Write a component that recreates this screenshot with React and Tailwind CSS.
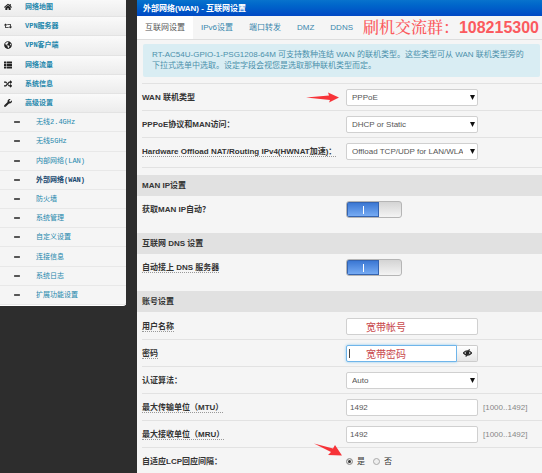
import React, { useState } from "react";
import { FaHome, FaRetweet, FaGlobeAmericas, FaThList, FaRandom, FaWrench, FaMinus } from "react-icons/fa";

const menu = [
  { icon: FaHome, label: "网络地图" },
  { icon: FaRetweet, label: "VPN服务器" },
  { icon: FaGlobeAmericas, label: "VPN客户端" },
  { icon: FaThList, label: "网络流量" },
  { icon: FaRandom, label: "系统信息" },
  { icon: FaWrench, label: "高级设置" },
];

const subMenu = [
  "无线2.4GHz", "无线5GHz", "内部网络(LAN)", "外部网络(WAN)", "防火墙",
  "系统管理", "自定义设置", "连接信息", "系统日志", "扩展功能设置",
];

const tabs = ["互联网设置", "IPv6设置", "端口转发", "DMZ", "DDNS"];

function Sidebar() {
  return (
    <nav className="w-[126px] shrink-0 self-start grid auto-rows-fr min-h-[308px] -mt-[2px] bg-[#f5f5f5] rounded-br-[3px] border-b border-white font-['Liberation_Mono','Noto_Sans_CJK_SC',monospace] text-[7px] leading-[8px] text-[#2487ac]">
      {menu.map(({ icon: Icon, label }) => (
        <a key={label} href="#" className="flex items-center pl-1 font-bold bg-linear-to-b from-[#fafafa] to-[#ececec] border-b border-[#e3e3e3]">
          <Icon className="w-2 h-2 mr-[13px] text-[#222]" />
          {label}
        </a>
      ))}
      {subMenu.map((label) => (
        <a key={label} href="#" className={"flex items-center pl-[14px] border-b border-[#e8e8e8] " + (label === "外部网络(WAN)" ? "font-bold text-[#17476f]" : "")}>
          <FaMinus className="w-[6px] h-2 mr-4 text-[#222]" />
          {label}
        </a>
      ))}
    </nav>
  );
}

function Row({ id, label, dotted, last, arrow, children }) {
  return (
    <div className={"relative flex items-center h-[27px] " + (last ? "" : "border-b border-[#e2e2e2]")}>
      <div className="w-[51%] shrink-0">
        <label htmlFor={id} className={"font-bold whitespace-nowrap " + (dotted ? "border-b border-dotted border-[#999]" : "")}>{label}</label>
      </div>
      {arrow}
      {children}
    </div>
  );
}

function Section({ children }) {
  return <h2 className="h-[21px] flex items-center pl-[5px] bg-[#e1e1e1] font-bold">{children}</h2>;
}

function Select({ id, options }) {
  return (
    <div className="relative w-[132px]">
      <select id={id} className="appearance-none w-full h-[17px] pl-[5px] pr-[14px] bg-white border border-[#d0d0d0] rounded-[2px] text-[#555]">
        {options.map((o) => <option key={o}>{o}</option>)}
      </select>
      <svg viewBox="0 0 6 6" className="absolute right-[3px] top-[6px] w-[5px] h-[5px] pointer-events-none">
        <path d="M0 0h6L3 6z" fill="#111" />
      </svg>
    </div>
  );
}

function Toggle({ id }) {
  const [on, setOn] = useState(true);
  return (
    <button
      id={id}
      type="button"
      role="switch"
      aria-checked={on}
      onClick={() => setOn(!on)}
      className={"flex w-14 h-[17px] rounded-[3px] border border-[#b5b5b5] bg-linear-to-b from-[#d4d4d4] to-[#f4f4f4] overflow-hidden " + (on ? "" : "flex-row-reverse")}
    >
      <span className="w-8 h-full flex items-center justify-center border border-[#3564b0] bg-linear-to-b from-[#3b77d3] to-[#76abf3]">
        <span className="w-px h-2 bg-white" />
      </span>
    </button>
  );
}

const inputCls = "h-[17px] min-w-0 bg-white border border-[#d0d0d0] rounded-[2px] text-[#555] outline-none";

export default function App() {
  const [lcp, setLcp] = useState("yes");

  return (
    <div className="flex min-h-screen overflow-hidden bg-[#2d2d2d] text-[#333] font-['Liberation_Sans','Noto_Sans_CJK_SC',sans-serif] text-[8px] leading-[11px]">
      <Sidebar />

      <main className="flex-1 min-w-0 ml-[11px] bg-[#f5f5f5]">
        <h1 className="h-4 flex items-center pl-[6px] font-bold text-white bg-linear-to-b from-[#0873cd] to-[#0148c4]">外部网络(WAN) - 互联网设置</h1>

        <div className="flex items-center h-6 border-b border-[#ddd]">
          <div className="flex shrink-0 h-full whitespace-nowrap">
            {tabs.map((t, i) => (
              <a key={t} href="#" className={"flex items-center px-2 " + (i === 0 ? "bg-white text-[#555]" : "text-[#3a87ad]")}>{t}</a>
            ))}
          </div>
          <strong className="ml-auto pr-[3px] whitespace-nowrap text-[16px] leading-[22px] text-[#fb5a5e]">
            <span className="font-medium font-['Noto_Serif_CJK_SC','Noto_Sans_CJK_SC',serif]">刷机交流群：</span>108215300
          </strong>
        </div>

        <p className="ml-[6px] mr-[2px] mt-1 mb-[6px] pt-[5px] pb-[6px] pl-[9px] pr-4 rounded-[2px] bg-[#d9edf3] text-[#4b90ab]">
          RT-AC54U-GPIO-1-PSG1208-64M 可支持数种连结 WAN 的联机类型。这些类型可从 WAN 联机类型旁的<br />
          下拉式选单中选取。设定字段会视您是选取那种联机类型而定。
        </p>

        <div className="ml-[5px] mb-[7px] border-y border-[#e2e2e2]">
          <Row
            id="wan"
            label="WAN 联机类型"
            arrow={
              <svg viewBox="0 0 33 11" className="absolute right-[203px] top-2 w-[33px] h-[11px]">
                <path d="M0 5.500 23 3.500 22 0.500 33 5.500 23 10.500 24 8z" fill="#f73338" />
              </svg>
            }
          >
            <Select id="wan" options={["PPPoE", "IPoE", "PPTP", "L2TP"]} />
          </Row>
          <Row id="man" label="PPPoE协议和MAN访问：">
            <Select id="man" options={["DHCP or Static", "Disabled"]} />
          </Row>
          <div className="pb-[2px]">
            <Row id="hw" label="Hardware Offload NAT/Routing IPv4(HWNAT加速)：" dotted last>
              <Select id="hw" options={["Offload TCP/UDP for LAN/WLAN", "Disabled"]} />
            </Row>
          </div>
        </div>

        <Section>MAN IP设置</Section>
        <div className="pl-[5px] pb-[10px]">
          <Row id="manip" label="获取MAN IP自动？" last><Toggle id="manip" /></Row>
        </div>

        <Section>互联网 DNS 设置</Section>
        <div className="pl-[5px] pb-[10px]">
          <Row id="dns" label="自动接上 DNS 服务器" dotted last><Toggle id="dns" /></Row>
        </div>

        <Section>账号设置</Section>
        <div className="pl-[5px] pt-px">
          <Row id="user" label="用户名称" dotted>
            <input id="user" defaultValue="宽带帐号" className="w-[132px] h-[17px] pl-[19px] bg-white border border-[#d0d0d0] rounded-[2px] text-[10px] text-[#c9484c] outline-none" />
          </Row>
          <Row id="pass" label="密码" dotted>
            <div className="relative flex w-[132px]">
              <input id="pass" defaultValue="宽带密码" className="flex-1 min-w-0 h-[17px] pl-[19px] bg-white border border-[#6fb5ea] rounded-l-[2px] text-[10px] text-[#c9484c] outline-none shadow-[0_0_3px_#8cc8f0]" />
              <span className="absolute left-[3px] top-1 w-px h-[9px] bg-[#444]" />
              <button type="button" aria-label="显示密码" className="w-[21px] h-[17px] flex items-center justify-center border border-l-0 border-[#ccc] rounded-r-[2px] bg-linear-to-b from-white to-[#e6e6e6]">
                <svg viewBox="0 0 16 14" className="w-[9px] h-2">
                  <path d="M0.500 7Q8-1 15.500 7 8 15 0.500 7z" fill="none" stroke="#222" strokeWidth="2" />
                  <circle cx="8" cy="7" r="3.500" fill="#222" />
                  <path d="M11.500 0.500 5 13.500" stroke="#222" strokeWidth="1.800" />
                </svg>
              </button>
            </div>
          </Row>
          <Row id="auth" label="认证算法：">
            <Select id="auth" options={["Auto", "PAP", "CHAP"]} />
          </Row>
          <Row id="mtu" label="最大传输单位（MTU）" dotted>
            <input id="mtu" defaultValue="1492" className={inputCls + " w-[132px] pl-[3px]"} />
            <span className="ml-[5px] text-[#888]">[1000..1492]</span>
          </Row>
          <Row id="mru" label="最大接收单位（MRU）" dotted>
            <input id="mru" defaultValue="1492" className={inputCls + " w-[132px] pl-[3px]"} />
            <span className="ml-[5px] text-[#888]">[1000..1492]</span>
          </Row>
          <Row
            id="lcp-yes"
            label="自适应LCP回应间隔："
            arrow={
              <svg viewBox="0 0 28 14" className="absolute right-[200px] -top-[5px] w-7 h-[14px]">
                <path d="M0 0.500 19 5.500 21 2 28 12.500 14 12 17 9z" fill="#f73338" />
              </svg>
            }
          >
            {[["yes", "是"], ["no", "否"]].map(([value, text]) => (
              <span key={value} className="flex items-center mr-2">
                <input
                  id={"lcp-" + value}
                  type="radio"
                  name="lcp"
                  checked={lcp === value}
                  onChange={() => setLcp(value)}
                  className="appearance-none w-[7px] h-[7px] rounded-full border border-[#aaa] bg-[#eee] checked:bg-[#333] checked:shadow-[inset_0_0_0_1px_#eee]"
                />
                <label htmlFor={"lcp-" + value} className="ml-1">{text}</label>
              </span>
            ))}
          </Row>
        </div>
      </main>
    </div>
  );
}
